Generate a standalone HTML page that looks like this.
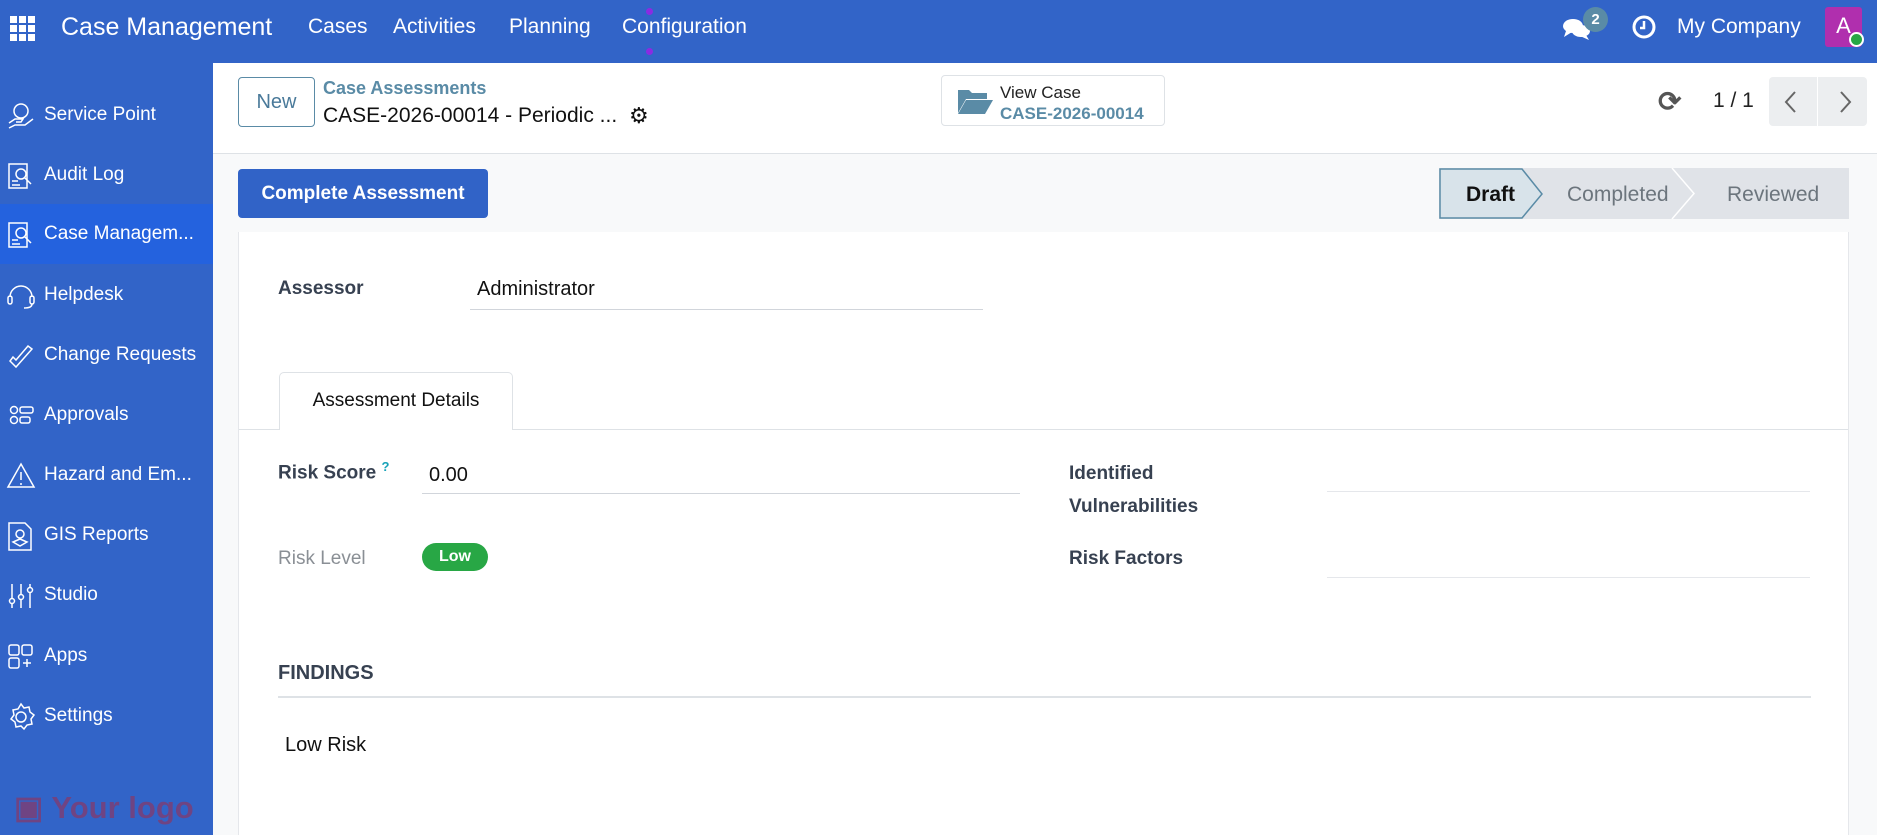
<!DOCTYPE html>
<html><head><meta charset="utf-8"><style>
*{box-sizing:border-box;margin:0;padding:0}
body{width:1877px;height:835px;overflow:hidden;font-family:"Liberation Sans",sans-serif;background:#f8f9fa;position:relative;color:#212529}
.abs{position:absolute}
.nav{left:0;top:0;width:1877px;height:63px;background:#3264c8;color:#fff}
.nav span{position:absolute;top:15px;font-size:21px;white-space:nowrap}
.side{left:0;top:63px;width:213px;height:772px;background:#3264c8;color:#fff}
.si{position:absolute;left:0;width:213px;height:60px;font-size:19px;line-height:60px;padding-left:44px;white-space:nowrap}
.si svg{position:absolute;left:6px;top:16px}
.cp{left:213px;top:63px;width:1664px;height:91px;background:#fff;border-bottom:1px solid #dee2e6}
.sheet{left:238px;top:232px;width:1611px;height:603px;background:#fff;border-left:1px solid #e5e7eb;border-right:1px solid #e5e7eb}
.lbl{position:absolute;font-size:19px;font-weight:bold;color:#374151;white-space:nowrap}
.line{position:absolute;height:1px;background:#d1d5db}
</style></head><body>
<div class="abs nav">
 <svg class="abs" style="left:10px;top:16px" width="26" height="26" viewBox="0 0 26 26" fill="#fff"><rect x="0" y="0" width="7" height="7"/><rect x="9" y="0" width="7" height="7"/><rect x="18" y="0" width="7" height="7"/><rect x="0" y="9" width="7" height="7"/><rect x="9" y="9" width="7" height="7"/><rect x="18" y="9" width="7" height="7"/><rect x="0" y="18" width="7" height="7"/><rect x="9" y="18" width="7" height="7"/><rect x="18" y="18" width="7" height="7"/></svg>
 <span style="left:61px;font-size:25px;top:13px">Case Management</span>
 <span style="left:308px">Cases</span>
 <span style="left:393px">Activities</span>
 <span style="left:509px">Planning</span>
 <span style="left:622px">Configuration</span>
 <div class="abs" style="left:646px;top:8px;width:7px;height:7px;border-radius:50%;background:#8a2be2"></div>
 <div class="abs" style="left:646px;top:48px;width:7px;height:7px;border-radius:50%;background:#8a2be2"></div>
 <svg class="abs" style="left:1562px;top:17px" width="30" height="24" viewBox="0 0 30 24" fill="#fff"><ellipse cx="11" cy="9" rx="10" ry="7"/><path d="M4 14 L2 20 L10 15Z"/><ellipse cx="19" cy="14" rx="9" ry="6"/><path d="M24 18 L27 23 L18 19Z"/></svg>
 <div class="abs" style="left:1583px;top:7px;width:25px;height:25px;border-radius:50%;background:#5a8ba6;color:#fff;font-size:15px;font-weight:bold;text-align:center;line-height:25px">2</div>
 <svg class="abs" style="left:1632px;top:15px" width="24" height="24" viewBox="0 0 24 24"><circle cx="12" cy="12" r="10" fill="none" stroke="#fff" stroke-width="3"/><path d="M12 6v7h-4" fill="none" stroke="#fff" stroke-width="2.5"/></svg>
 <span style="left:1677px">My Company</span>
 <div class="abs" style="left:1825px;top:7px;width:37px;height:40px;background:#b02fae;border-radius:3px;color:#fff;font-size:22px;text-align:center;line-height:38px">A</div>
 <div class="abs" style="left:1849px;top:32px;width:15px;height:15px;border-radius:50%;background:#28a745;border:2px solid #fff"></div>
</div>
<div class="abs side">
 <div class="si" style="top:22px"><svg width="30" height="30" viewBox="0 0 30 30" fill="none" stroke="#fff" stroke-width="1.5"><circle cx="15" cy="10" r="7"/><path d="M3 22l6-4h8l-2 3h-5M3 27l6-3h10l8-6"/></svg>Service Point</div>
 <div class="si" style="top:82px"><svg width="30" height="30" viewBox="0 0 30 30" fill="none" stroke="#fff" stroke-width="1.5"><rect x="3" y="3" width="18" height="24"/><circle cx="15" cy="13" r="5"/><path d="M19 17l6 6M6 20h6M6 24h8"/></svg>Audit Log</div>
 <div class="si" style="top:141px;background:#2462de"><svg width="30" height="30" viewBox="0 0 30 30" fill="none" stroke="#fff" stroke-width="1.5"><rect x="3" y="3" width="18" height="24"/><circle cx="15" cy="13" r="5"/><path d="M19 17l6 6M6 20h6M6 24h8"/></svg>Case Managem...</div>
 <div class="si" style="top:202px"><svg width="30" height="30" viewBox="0 0 30 30" fill="none" stroke="#fff" stroke-width="1.5"><path d="M4 16a11 11 0 0 1 22 0"/><rect x="2" y="15" width="4" height="8" rx="2"/><rect x="24" y="15" width="4" height="8" rx="2"/><path d="M26 23q0 4-8 4"/></svg>Helpdesk</div>
 <div class="si" style="top:262px"><svg width="30" height="30" viewBox="0 0 30 30" fill="none" stroke="#fff" stroke-width="1.5"><path d="M4 20l6 6 16-18-4-3-12 14-3-3z"/></svg>Change Requests</div>
 <div class="si" style="top:322px"><svg width="30" height="30" viewBox="0 0 30 30" fill="none" stroke="#fff" stroke-width="1.5"><circle cx="8" cy="9" r="3.5"/><circle cx="8" cy="19" r="3.5"/><rect x="14" y="6" width="13" height="6" rx="2"/><rect x="14" y="16" width="10" height="6" rx="2"/></svg>Approvals</div>
 <div class="si" style="top:382px"><svg width="30" height="30" viewBox="0 0 30 30" fill="none" stroke="#fff" stroke-width="1.5"><path d="M15 3L28 26H2z"/><path d="M15 11v8M15 22v2"/></svg>Hazard and Em...</div>
 <div class="si" style="top:442px"><svg width="30" height="30" viewBox="0 0 30 30" fill="none" stroke="#fff" stroke-width="1.5"><path d="M3 2h16l6 6v21H3z"/><circle cx="14" cy="13" r="4"/><path d="M7 21l7 4 7-4-7-3z"/></svg>GIS Reports</div>
 <div class="si" style="top:502px"><svg width="30" height="30" viewBox="0 0 30 30" fill="none" stroke="#fff" stroke-width="1.5"><path d="M6 3v24M15 3v24M24 3v24"/><circle cx="6" cy="20" r="2.5" fill="#3264c8"/><circle cx="15" cy="16" r="2.5" fill="#3264c8"/><circle cx="24" cy="9" r="2.5" fill="#3264c8"/></svg>Studio</div>
 <div class="si" style="top:563px"><svg width="30" height="30" viewBox="0 0 30 30" fill="none" stroke="#fff" stroke-width="1.5"><rect x="3" y="3" width="10" height="10" rx="2"/><rect x="16" y="3" width="10" height="10" rx="2"/><rect x="3" y="16" width="10" height="10" rx="2"/><path d="M21 17v8M17 21h8"/></svg>Apps</div>
 <div class="si" style="top:623px"><svg width="30" height="30" viewBox="0 0 30 30" fill="none" stroke="#fff" stroke-width="1.5"><circle cx="15" cy="15" r="5"/><path d="M15 2l3 4 5-1 1 5 4 3-3 4 1 5-5 1-3 4-3-3-5 1-1-5-4-3 3-4-1-5 5-1z"/></svg>Settings</div>
 <div class="abs" style="left:14px;top:727px;font-size:31px;font-weight:bold;color:#7a3f78;opacity:.85">▣ Your logo</div>
</div>
<div class="abs cp">
 <div class="abs" style="left:25px;top:14px;width:77px;height:50px;border:1px solid #5a8ba6;border-radius:4px;color:#4a7a9a;font-size:20px;text-align:center;line-height:48px">New</div>
 <div class="abs" style="left:110px;top:15px;font-size:18px;font-weight:bold;color:#5a8ba6">Case Assessments</div>
 <div class="abs" style="left:110px;top:41px;font-size:21px;color:#111">CASE-2026-00014 - Periodic ...</div>
 <div class="abs" style="left:416px;top:40px;font-size:22px;color:#111">⚙</div>
 <div class="abs" style="left:728px;top:12px;width:224px;height:51px;border:1px solid #dee2e6;border-radius:4px"></div>
 <svg class="abs" style="left:744px;top:23px" width="36" height="30" viewBox="0 0 36 30"><path d="M1 4h11l3 3h15v6H9L1 27z" fill="#5a8ba6"/><path d="M9 14h27l-8 14H1z" fill="#5a8ba6"/></svg>
 <div class="abs" style="left:787px;top:20px;font-size:17px;color:#222">View Case</div>
 <div class="abs" style="left:787px;top:41px;font-size:17px;font-weight:bold;color:#5a8ba6">CASE-2026-00014</div>
 <div class="abs" style="left:1445px;top:22px;font-size:28px;color:#555;font-weight:bold">⟳</div>
 <div class="abs" style="left:1500px;top:26px;font-size:21px;color:#222">1 / 1</div>
 <div class="abs" style="left:1556px;top:14px;width:98px;height:49px;background:#eceef0;border-radius:4px"></div>
 <div class="abs" style="left:1604px;top:14px;width:1px;height:49px;background:#fff"></div>
 <svg class="abs" style="left:1570px;top:28px" width="70" height="22" viewBox="0 0 70 22" fill="none" stroke="#666" stroke-width="2"><path d="M12 1L3 11l9 10M58 1l9 10-9 10"/></svg>
</div>
<div class="abs" style="left:238px;top:169px;width:250px;height:49px;background:#3163c7;border-radius:4px;color:#fff;font-size:19px;font-weight:bold;text-align:center;line-height:49px">Complete Assessment</div>
<svg class="abs" style="left:1439px;top:168px" width="410" height="51" viewBox="0 0 410 51"><rect x="0" y="0" width="410" height="51" fill="#e0e3e8"/><path d="M1 1h82l20 25-20 24H1z" fill="#d8e3ea" stroke="#5a8ba6" stroke-width="1.5"/><path d="M233 0l22 25.5L233 51" fill="none" stroke="#fff" stroke-width="1.5"/><text x="27" y="33" font-family="Liberation Sans" font-size="21" font-weight="bold" fill="#111">Draft</text><text x="128" y="33" font-family="Liberation Sans" font-size="21" fill="#6c757d">Completed</text><text x="288" y="33" font-family="Liberation Sans" font-size="21" fill="#6c757d">Reviewed</text></svg>
<div class="abs sheet">
 <div class="lbl" style="left:39px;top:46px">Assessor</div>
 <div class="abs" style="left:238px;top:46px;font-size:20px;color:#111">Administrator</div>
 <div class="line" style="left:231px;top:77px;width:513px"></div>
 <div class="abs" style="left:40px;top:140px;width:234px;height:58px;border:1px solid #dee2e6;border-bottom:none;border-radius:5px 5px 0 0;background:#fff;font-size:19px;text-align:center;line-height:56px;color:#111;z-index:2">Assessment Details</div>
 <div class="line" style="left:0;top:197px;width:1609px;background:#dee2e6"></div>
 <div class="lbl" style="left:39px;top:227px">Risk Score <sup style="color:#17a2b8;font-size:13px">?</sup></div>
 <div class="abs" style="left:190px;top:232px;font-size:20px;color:#111">0.00</div>
 <div class="line" style="left:183px;top:261px;width:598px"></div>
 <div class="lbl" style="left:39px;top:316px;color:#8a8f95;font-weight:normal">Risk Level</div>
 <div class="abs" style="left:183px;top:311px;width:66px;height:28px;border-radius:14px;background:#28a745;color:#fff;font-size:16px;font-weight:bold;text-align:center;line-height:28px">Low</div>
 <div class="lbl" style="left:830px;top:225px;line-height:33px">Identified<br>Vulnerabilities</div>
 <div class="line" style="left:1088px;top:259px;width:483px;background:#e5e7eb"></div>
 <div class="lbl" style="left:830px;top:316px">Risk Factors</div>
 <div class="line" style="left:1088px;top:345px;width:483px;background:#e5e7eb"></div>
 <div class="lbl" style="left:39px;top:430px;font-size:20px">FINDINGS</div>
 <div class="line" style="left:39px;top:464px;width:1533px;height:2px;background:#dee2e6"></div>
 <div class="abs" style="left:46px;top:502px;font-size:20px;color:#111">Low Risk</div>
</div>
</body></html>
